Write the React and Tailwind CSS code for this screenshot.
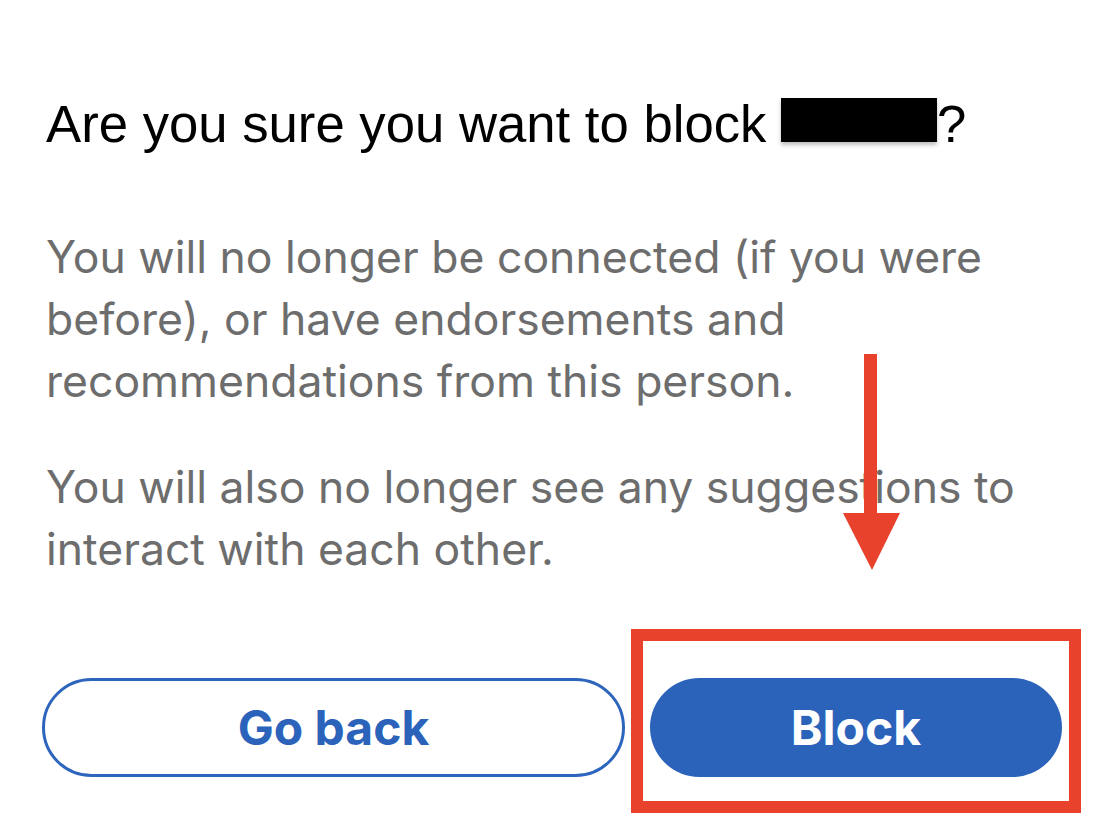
import React from 'react';

const App = () => {
    return (
        <div className="relative w-[1111px] h-[827px] overflow-hidden bg-white">
            <div className="flex flex-col pl-[46px] pt-[92px]">
                {/* Title */}
                <h1
                    className="text-[52.7px] leading-[64px] text-black font-normal whitespace-nowrap"
                    style={{ fontFamily: '"Liberation Sans", Arial, sans-serif' }}
                >
                    Are you sure you want to block{' '}
                    <span className="inline-block w-[156px] h-[44px] bg-black align-baseline shadow-[0_3px_4px_rgba(0,0,0,0.25)]" />
                    ?
                </h1>

                {/* Body */}
                <div
                    className="flex flex-col gap-[44px] mt-[70px] text-[44.5px] leading-[62px] text-[#6d6d6d]"
                    style={{ fontFamily: 'Inter, "Noto Sans", sans-serif' }}
                >
                    <p className="whitespace-nowrap">
                        You will no longer be connected (if you were
                        <br />
                        before), or have endorsements and
                        <br />
                        recommendations from this person.
                    </p>
                    <p className="whitespace-nowrap">
                        You will also no longer see any suggestions to
                        <br />
                        interact with each other.
                    </p>
                </div>

                {/* Buttons */}
                <div
                    className="flex gap-[25px] mt-[98px] -ml-[4px]"
                    style={{ fontFamily: 'Inter, "Noto Sans", sans-serif' }}
                >
                    <button className="w-[583px] h-[99px] rounded-full border-[3px] border-[#2d65bc] bg-white text-[48px] font-bold text-[#2b63bb]">
                        Go back
                    </button>
                    <button className="w-[412px] h-[99px] rounded-full bg-[#2b63bb] text-[48px] font-bold text-white">
                        Block
                    </button>
                </div>
            </div>

            {/* Annotation: red box */}
            <div className="absolute left-[631px] top-[629px] w-[450px] h-[184px] border-[12px] border-[#e8412c]" />

            {/* Annotation: red arrow */}
            <svg className="absolute left-[840px] top-[350px]" width="64" height="224" viewBox="0 0 64 224">
                <rect x="24" y="4" width="13" height="164" fill="#e8412c" />
                <polygon points="3,163 60,163 32,220" fill="#e8412c" />
            </svg>
        </div>
    );
};

export default App;
